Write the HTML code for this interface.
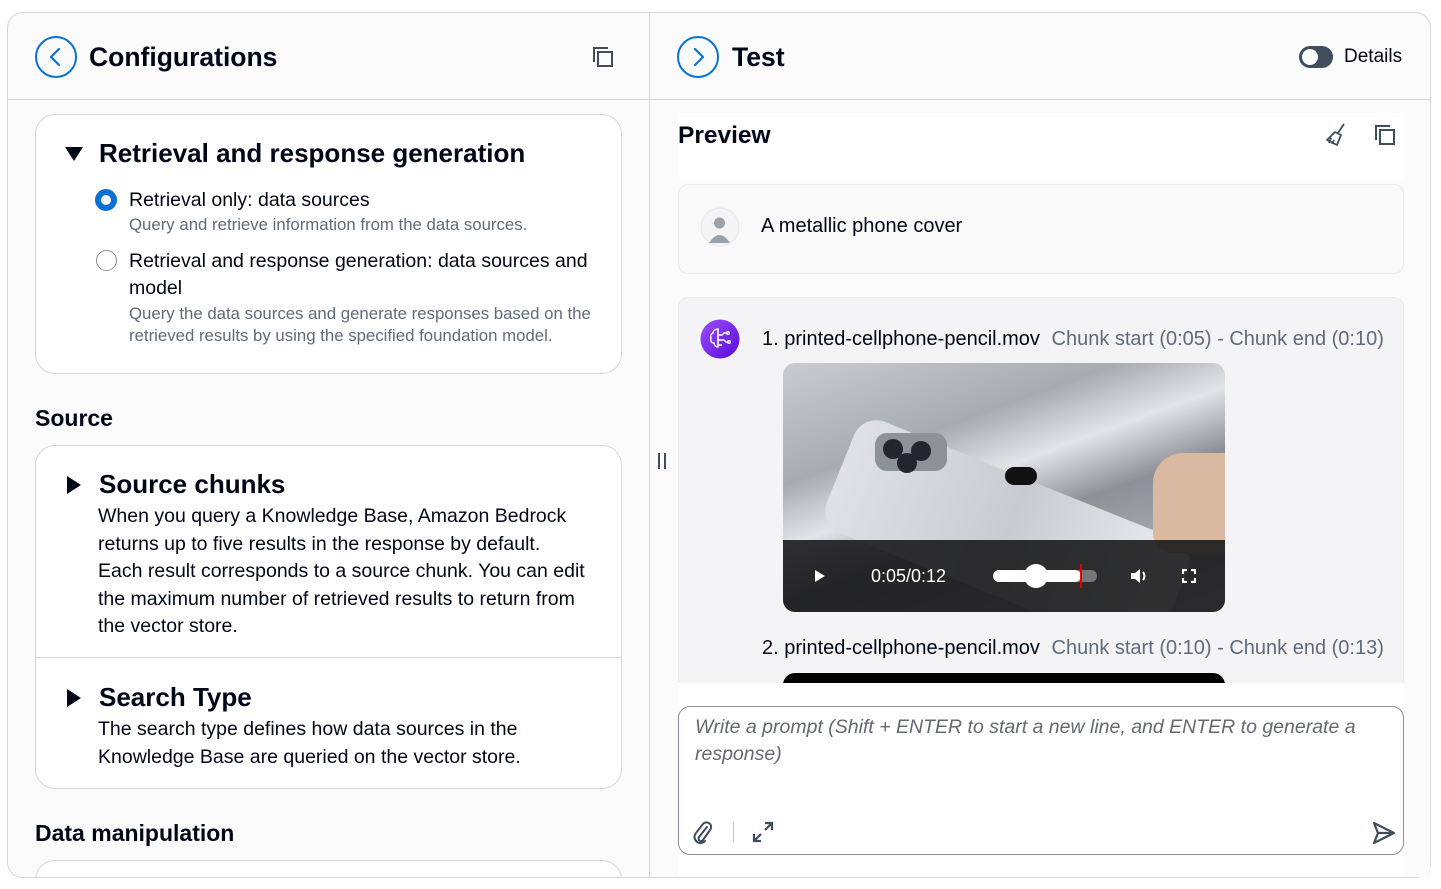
<!DOCTYPE html>
<html><head><meta charset="utf-8">
<style>
*{box-sizing:border-box;margin:0;padding:0}
body{width:1441px;height:889px;background:#fff;font-family:"Liberation Sans",sans-serif;color:#000716;position:relative;overflow:hidden}
.a{position:absolute;white-space:nowrap}
.outer{position:absolute;left:7px;top:12px;width:1424px;height:866px;border:1px solid #d5d7db;border-radius:16px;background:#fbfbfc;overflow:hidden}
.card{position:absolute;background:#fff;border:1px solid #d5d7db;border-radius:20px}
.h1{font-size:26px;font-weight:bold}
.t{font-size:19.5px}
.d{font-size:16.8px;color:#5f6b7a}
.b{font-size:19.5px;line-height:27.5px}
.g{color:#5f6b7a}
</style></head><body>
<div class="outer">
  <div style="position:absolute;left:27px;top:847px;width:587px;height:60px;background:#fff;border:1px solid #d5d7db;border-radius:20px"></div>
</div>
<div class="a" style="left:8px;top:99px;width:1422px;height:1px;background:#d5d7db"></div>
<div class="a" style="left:649px;top:13px;width:1px;height:864px;background:#d5d7db"></div>

<svg class="a" style="left:34px;top:35px" width="44" height="44" viewBox="0 0 44 44"><circle cx="22" cy="22" r="20" fill="none" stroke="#0972d3" stroke-width="2"/><path d="M25 14 L17 22 L25 30" fill="none" stroke="#0972d3" stroke-width="2.2" stroke-linecap="round" stroke-linejoin="round"/></svg>
<div class="a h1" style="left:89px;top:42px;font-size:26.5px">Configurations</div>
<svg class="a" style="left:591px;top:45px" width="24" height="24" viewBox="0 0 24 24" fill="none" stroke="#414d5c" stroke-width="2"><path d="M3 17V3h14"/><rect x="7" y="7" width="14" height="14"/></svg>

<svg class="a" style="left:676px;top:35px" width="44" height="44" viewBox="0 0 44 44"><circle cx="22" cy="22" r="20" fill="none" stroke="#0972d3" stroke-width="2"/><path d="M19 14 L27 22 L19 30" fill="none" stroke="#0972d3" stroke-width="2.2" stroke-linecap="round" stroke-linejoin="round"/></svg>
<div class="a h1" style="left:732px;top:42px;font-size:26.5px">Test</div>
<div class="a" style="left:1299px;top:46px;width:34px;height:22px;border-radius:11px;background:#414d5c"></div>
<div class="a" style="left:1302px;top:49px;width:16px;height:16px;border-radius:8px;background:#fff"></div>
<div class="a" style="left:1344px;top:46px;font-size:19px">Details</div>

<div class="card" style="left:35px;top:114px;width:587px;height:260px"></div>
<svg class="a" style="left:64px;top:146px" width="20" height="16"><path d="M1 1h18L10 15z" fill="#000716"/></svg>
<div class="a h1" style="left:99px;top:138px">Retrieval and response generation</div>
<div class="a" style="left:95px;top:189px;width:22px;height:22px;border-radius:11px;border:6px solid #0972d3;background:#fff"></div>
<div class="a t" style="left:129px;top:189px">Retrieval only: data sources</div>
<div class="a d" style="left:129px;top:215px">Query and retrieve information from the data sources.</div>
<div class="a" style="left:96px;top:250px;width:21px;height:21px;border-radius:11px;border:1.5px solid #8c8c94;background:#fff"></div>
<div class="a t" style="left:129px;top:250px">Retrieval and response generation: data sources and</div>
<div class="a t" style="left:129px;top:277px">model</div>
<div class="a d" style="left:129px;top:304px">Query the data sources and generate responses based on the</div>
<div class="a d" style="left:129px;top:326px">retrieved results by using the specified foundation model.</div>

<div class="a" style="left:35px;top:405px;font-size:23px;font-weight:bold">Source</div>

<div class="card" style="left:35px;top:445px;width:587px;height:344px"></div>
<div class="a" style="left:36px;top:657px;width:585px;height:1px;background:#d5d7db"></div>
<svg class="a" style="left:66px;top:475px" width="16" height="20"><path d="M1 1v18l14-9z" fill="#000716"/></svg>
<div class="a h1" style="left:99px;top:469px">Source chunks</div>
<div class="a b" style="left:98px;top:503px">When you query a Knowledge Base, Amazon Bedrock<br>returns up to five results in the response by default.<br>Each result corresponds to a source chunk. You can edit<br>the maximum number of retrieved results to return from<br>the vector store.</div>
<svg class="a" style="left:66px;top:688px" width="16" height="20"><path d="M1 1v18l14-9z" fill="#000716"/></svg>
<div class="a h1" style="left:99px;top:682px">Search Type</div>
<div class="a b" style="left:98px;top:716px">The search type defines how data sources in the<br>Knowledge Base are queried on the vector store.</div>

<div class="a" style="left:35px;top:820px;font-size:23px;font-weight:bold">Data manipulation</div>

<div class="a" style="left:658px;top:453px;width:2px;height:16px;background:#414d5c"></div>
<div class="a" style="left:664px;top:453px;width:2px;height:16px;background:#414d5c"></div>

<div class="a" style="left:678px;top:113px;width:726px;height:67px;background:#fff"></div>
<div class="a" style="left:678px;top:122px;font-size:24.5px;font-weight:bold">Preview</div>
<svg class="a" style="left:1324px;top:122px" width="24" height="26" viewBox="0 0 24 26" fill="none" stroke="#414d5c" stroke-width="1.8" stroke-linejoin="round"><path d="M20 2 L14 11"/><path d="M11 10 L17 13 L13 23 L3 18 Z"/><path d="M7 16 L5 21 M10 18 L8 22"/></svg>
<svg class="a" style="left:1373px;top:123px" width="24" height="24" viewBox="0 0 24 24" fill="none" stroke="#414d5c" stroke-width="2"><path d="M3 17V3h14"/><rect x="7" y="7" width="14" height="14"/></svg>

<div class="a" style="left:678px;top:184px;width:726px;height:90px;background:#f9f9fa;border:1px solid #ebebf0;border-radius:10px"></div>
<svg class="a" style="left:700px;top:207px" width="40" height="40" viewBox="0 0 40 40"><circle cx="20" cy="20" r="19" fill="#f4f4f6" stroke="#e6e6ea"/><circle cx="19.5" cy="16" r="5.5" fill="#9ba1a8"/><path d="M9 36 Q19.5 20 30 36Z" fill="#9ba1a8"/></svg>
<div class="a" style="left:761px;top:215px;font-size:20px">A metallic phone cover</div>

<div class="a" style="left:678px;top:297px;width:726px;height:400px;background:#f4f4f6;border:1px solid #ebebf0;border-radius:10px"></div>
<svg class="a" style="left:700px;top:319px" width="40" height="40" viewBox="0 0 40 40"><defs><linearGradient id="p" x1="0" y1="0" x2="1" y2="1"><stop offset="0" stop-color="#9b4dff"/><stop offset="1" stop-color="#5a0bd8"/></linearGradient></defs><circle cx="20" cy="20" r="19.5" fill="url(#p)"/><g fill="none" stroke="#fff" stroke-width="1.4"><path d="M18 10c-3 0-5 2-5 4-2 1-3 3-2 5-1 2 0 5 3 5 0 2 2 4 4 4z"/><path d="M18 10v18M18 16h4l2-2h3M18 21h6l2 2h2M18 26h4"/><circle cx="28" cy="14" r="1.3"/><circle cx="29" cy="23" r="1.3"/></g></svg>
<div class="a" style="left:762px;top:328px;font-size:20px">1. printed-cellphone-pencil.mov <span class="g" style="margin-left:6px">Chunk start (0:05) - Chunk end (0:10)</span></div>

<div class="a" style="left:783px;top:363px;width:442px;height:249px;border-radius:12px;overflow:hidden;background:linear-gradient(160deg,#c9ccd2 0%,#a7abb2 30%,#e2e4e8 45%,#8d9098 60%,#c5c8cd 100%)">
  <div style="position:absolute;left:80px;top:50px;width:360px;height:120px;transform:rotate(22deg);transform-origin:0 0;border-radius:24px;background:linear-gradient(90deg,#dfe1e6,#c8cbd2 50%,#eeeff2)"></div>
  <div style="position:absolute;left:92px;top:70px;width:72px;height:38px;border-radius:12px;background:#8d9198"></div>
  <div style="position:absolute;left:100px;top:76px;width:20px;height:20px;border-radius:10px;background:#22262e"></div>
  <div style="position:absolute;left:128px;top:78px;width:20px;height:20px;border-radius:10px;background:#22262e"></div>
  <div style="position:absolute;left:114px;top:90px;width:20px;height:20px;border-radius:10px;background:#22262e"></div>
  <div style="position:absolute;left:222px;top:104px;width:32px;height:18px;border-radius:9px;background:#111"></div>
  <div style="position:absolute;left:370px;top:90px;width:80px;height:100px;border-radius:30px 0 0 20px;background:#d9b9a0"></div>
  <div style="position:absolute;left:0;top:177px;width:442px;height:72px;background:rgba(20,20,22,0.88)"></div>
  <svg style="position:absolute;left:31px;top:206px" width="12" height="14"><path d="M1 1v12l10-6z" fill="#fff"/></svg>
  <div style="position:absolute;left:88px;top:203px;font-size:18px;color:#fff">0:05/0:12</div>
  <div style="position:absolute;left:210px;top:207px;width:104px;height:12px;border-radius:6px;background:#777"></div>
  <div style="position:absolute;left:210px;top:207px;width:88px;height:12px;border-radius:6px;background:#fff"></div>
  <div style="position:absolute;left:241px;top:201px;width:24px;height:24px;border-radius:12px;background:#fff"></div>
  <div style="position:absolute;left:297px;top:201px;width:2px;height:24px;background:#e00"></div>
  <svg style="position:absolute;left:347px;top:205px" width="18" height="16"><path d="M1 5h4l5-4v14l-5-4H1z" fill="#fff"/><path d="M13 4q3 4 0 8" stroke="#fff" stroke-width="2" fill="none"/></svg>
  <svg style="position:absolute;left:399px;top:206px" width="14" height="14" fill="none" stroke="#fff" stroke-width="2.2"><path d="M1 5V1h4M9 1h4v4M13 9v4H9M5 13H1V9"/></svg>
</div>
<div class="a" style="left:762px;top:637px;font-size:20px">2. printed-cellphone-pencil.mov <span class="g" style="margin-left:6px">Chunk start (0:10) - Chunk end (0:13)</span></div>
<div class="a" style="left:783px;top:673px;width:442px;height:40px;border-radius:12px;background:#000"></div>
<div class="a" style="left:650px;top:683px;width:780px;height:194px;background:#fbfbfc"></div>
<div class="a" style="left:678px;top:683px;width:726px;height:194px;background:#fff"></div>

<div class="a" style="left:678px;top:706px;width:726px;height:149px;border:1px solid #8c8c94;border-radius:12px;background:#fff"></div>
<div class="a" style="left:695px;top:714px;font-size:19.5px;font-style:italic;color:#656871;line-height:27px">Write a prompt (Shift + ENTER to start a new line, and ENTER to generate a<br>response)</div>
<svg class="a" style="left:692px;top:821px" width="22" height="24" viewBox="0 0 22 24" fill="none" stroke="#414d5c" stroke-width="2" stroke-linecap="round"><path d="M15 6 L7 16 a2.5 2.5 0 0 0 4 3 L18 9 a4.5 4.5 0 0 0 -7 -6 L4 12 a6 6 0 0 0 9 8"/></svg>
<div class="a" style="left:733px;top:822px;width:1px;height:20px;background:#c6c6cd"></div>
<svg class="a" style="left:752px;top:821px" width="22" height="22" viewBox="0 0 22 22" fill="none" stroke="#414d5c" stroke-width="2.2"><path d="M13 2h7v7M20 2l-7 7M9 20H2v-7M2 20l7-7"/></svg>
<svg class="a" style="left:1371px;top:820px" width="26" height="26" viewBox="0 0 26 26" fill="none" stroke="#414d5c" stroke-width="2.2" stroke-linejoin="round"><path d="M3 3 L23 13 L3 23 L7 13 Z M7 13h16"/></svg>
</body></html>
